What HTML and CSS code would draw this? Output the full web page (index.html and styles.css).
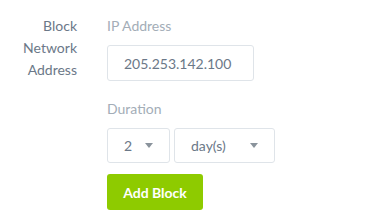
FILE: index.html
```html
<!DOCTYPE html>
<html lang="en">
<head>
    <meta charset="UTF-8">
    <meta name="viewport" content="width=device-width, initial-scale=1.0">
    <title>Block Network Address</title>
    <link rel="stylesheet" href="styles.css">
</head>
<body>
    <div class="form-row">
        <div class="row-label">Block<br>Network<br>Address</div>

        <div class="row-fields">
            <label class="field-label">IP Address</label>
            <input type="text" class="ip-input" value="205.253.142.100">

            <label class="field-label duration-label">Duration</label>
            <div class="duration">
                <div class="select select-num">
                    <span>2</span>
                    <span class="arrow"></span>
                </div>
                <div class="select select-unit">
                    <span>day(s)</span>
                    <span class="arrow"></span>
                </div>
            </div>

            <button class="add-btn">Add Block</button>
        </div>
    </div>
</body>
</html>
```

FILE: styles.css
```css
body {
    margin: 0;
    padding: 0;
    font-family: Lato, "Open Sans", sans-serif;
    font-size: 14px;
    background: #ffffff;
    color: #6b7888;
}
.form-row {
    display: flex;
    padding-top: 15px;
}
.row-label {
    width: 77px;
    text-align: right;
    line-height: 22px;
    color: #6b7888;
}
.row-fields {
    display: flex;
    flex-direction: column;
    align-items: flex-start;
    margin-left: 30px;
}
.field-label {
    line-height: 22px;
    color: #a3adb7;
}
.duration-label {
    margin-top: 17px;
}
.ip-input {
    box-sizing: border-box;
    width: 147px;
    height: 36px;
    margin-top: 8px;
    padding: 0 10px 0 16px;
    border: 1px solid #dfe4e9;
    border-radius: 3px;
    font-family: inherit;
    font-size: 14px;
    color: #6b7888;
    outline: none;
}
.duration {
    display: flex;
    gap: 4px;
    margin-top: 8px;
}
.select {
    box-sizing: border-box;
    height: 35px;
    display: flex;
    align-items: center;
    justify-content: space-between;
    padding: 0 16px;
    border: 1px solid #dfe4e9;
    border-radius: 3px;
    font-size: 14px;
    color: #6b7888;
}
.select-num {
    width: 63px;
}
.select-unit {
    width: 101px;
}
.arrow {
    width: 0;
    height: 0;
    border-left: 4px solid transparent;
    border-right: 4px solid transparent;
    border-top: 5px solid #8a939c;
}
.add-btn {
    margin-top: 11px;
    width: 96px;
    height: 36px;
    border: none;
    border-radius: 3px;
    background-color: #8ecb00;
    color: #ffffff;
    font-family: inherit;
    font-size: 14px;
    font-weight: bold;
    cursor: pointer;
}
```
